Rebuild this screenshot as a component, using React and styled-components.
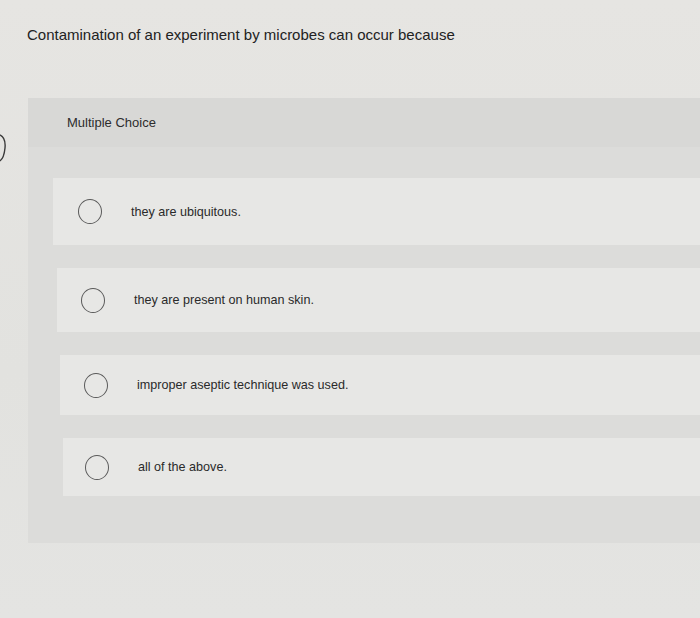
import React from "react";
import styled, { createGlobalStyle } from "styled-components";

const Global = createGlobalStyle`
  html, body { margin: 0; padding: 0; background: #e4e3e0; }
  body { font-family: "Liberation Sans", Arial, sans-serif; color: #2b2b2b; }
`;

const Page = styled.div`
  width: 700px;
  height: 618px;
  overflow: hidden;
  display: flex;
  flex-direction: column;
  background: linear-gradient(180deg, #e6e5e2 0%, #e2e2df 60%, #e4e4e2 100%);
`;

const Title = styled.h1`
  margin: 26px 0 0 27px;
  font-size: 15px;
  line-height: 18px;
  font-weight: 400;
  color: #222;
`;

const Stage = styled.div`
  display: flex;
  align-items: flex-start;
  margin-top: 54px;
`;

const Edge = styled.svg`
  flex: 0 0 6px;
  margin-top: 36px;
`;

const Panel = styled.section`
  flex: 1;
  margin-left: 22px;
  background: #dcdcda;
  padding-bottom: 47px;
  display: flex;
  flex-direction: column;
`;

const Header = styled.div`
  height: 49px;
  display: flex;
  align-items: center;
  padding-left: 39px;
  background: #d8d8d6;
  font-size: 13px;
  color: #2d2d2d;
`;

const List = styled.div`
  display: flex;
  flex-direction: column;
  padding-top: 31px;
`;

const Row = styled.label`
  display: flex;
  align-items: center;
  height: ${(p) => p.$h}px;
  margin-left: ${(p) => p.$shift}px;
  margin-top: ${(p) => p.$gap}px;
  padding-left: ${(p) => p.$pad}px;
  background: #e7e7e5;
  font-size: 12.6px;
  color: #2a2a2a;
`;

const Radio = styled.span`
  flex: 0 0 auto;
  width: 22px;
  height: 23px;
  border: 1.5px solid #5a5a5a;
  border-radius: 50%;
  margin-right: 29px;
`;

const options = [
  { text: "they are ubiquitous.", h: 67, shift: 25, pad: 25, gap: 0 },
  { text: "they are present on human skin.", h: 64, shift: 29, pad: 24, gap: 23 },
  { text: "improper aseptic technique was used.", h: 60, shift: 32, pad: 24, gap: 23 },
  { text: "all of the above.", h: 58, shift: 35, pad: 22, gap: 23 },
];

export default function App() {
  return (
    <>
      <Global />
      <Page>
        <Title>Contamination of an experiment by microbes can occur because</Title>
        <Stage>
          <Edge width="6" height="28" viewBox="0 0 6 28">
            <path d="M0 1 Q6 4 5 14 Q4 24 0 27" fill="none" stroke="#3a3a3a" strokeWidth="1.4" />
          </Edge>
          <Panel>
            <Header>Multiple Choice</Header>
            <List>
              {options.map((o) => (
                <Row key={o.text} $h={o.h} $shift={o.shift} $pad={o.pad} $gap={o.gap}>
                  <Radio />
                  {o.text}
                </Row>
              ))}
            </List>
          </Panel>
        </Stage>
      </Page>
    </>
  );
}
